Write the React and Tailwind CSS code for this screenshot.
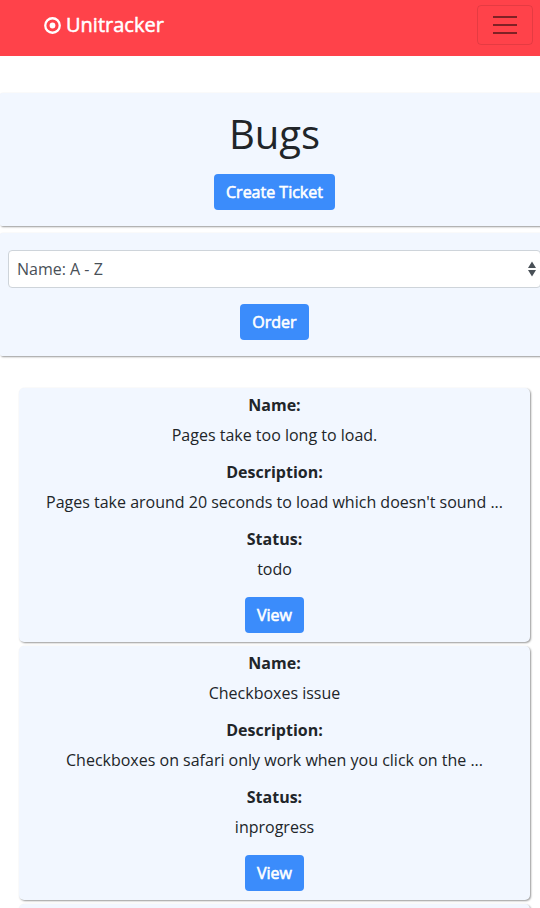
const tickets = [
  {
    name: "Pages take too long to load.",
    description: "Pages take around 20 seconds to load which doesn't sound ...",
    status: "todo",
  },
  {
    name: "Checkboxes issue",
    description: "Checkboxes on safari only work when you click on the ...",
    status: "inprogress",
  },
];

function Button({ children }) {
  return (
    <button className="h-9 rounded-[4px] bg-[#3b8cfb] px-3 text-base leading-6 font-normal whitespace-nowrap text-white [-webkit-text-stroke:0.6px_white]">
      {children}
    </button>
  );
}

function Field({ label, value }) {
  return (
    <div className="mb-[7px]">
      <div className="h-[30px] leading-[30px] font-bold">{label}</div>
      <div className="h-[30px] leading-[30px] whitespace-nowrap">{value}</div>
    </div>
  );
}

function TicketCard({ ticket }) {
  return (
    <article className="flex h-[254px] flex-col items-center rounded-[5px] bg-[#f2f7ff] pt-[2px] text-center shadow-[1px_1px_2px_#999]">
      <Field label="Name:" value={ticket.name} />
      <Field label="Description:" value={ticket.description} />
      <Field label="Status:" value={ticket.status} />
      <div className="mt-[6px]">
        <Button>View</Button>
      </div>
    </article>
  );
}

export default function App() {
  return (
    <div className="h-[908px] w-[540px] overflow-hidden bg-white font-['Open_Sans',sans-serif] text-base text-[#212529]">
      <nav className="flex h-14 items-start justify-between bg-[#ff424a] pr-[7px] pl-11">
        <div className="flex h-[50px] items-center gap-[5px] text-xl leading-[30px] font-normal text-white">
          <svg width="17" height="17" viewBox="0 0 17 17" fill="none">
            <circle cx="8.5" cy="8.5" r="7.25" stroke="currentColor" strokeWidth="2.3" />
            <circle cx="8.5" cy="8.5" r="2.9" fill="currentColor" />
          </svg>
          <span className="mb-px [-webkit-text-stroke:0.5px_white]">Unitracker</span>
        </div>
        <button
          aria-label="Toggle navigation"
          className="mt-[5px] flex h-10 w-14 flex-col items-center justify-center gap-[6px] rounded-[4px] border border-black/10"
        >
          <span className="h-[2px] w-6 bg-black/50" />
          <span className="h-[2px] w-6 bg-black/50" />
          <span className="h-[2px] w-6 bg-black/50" />
        </button>
      </nav>

      <main className="w-[549px] pt-[37px]">
        <header className="flex h-[133px] flex-col items-center rounded-[2px] bg-[#f2f7ff] pt-[17px] shadow-[1px_1px_2px_#999]">
          <h1 className="mb-4 text-[40px] leading-[48px] font-normal">Bugs</h1>
          <Button>Create Ticket</Button>
        </header>

        <section className="mt-[7px] flex h-[123px] flex-col items-center rounded-[2px] bg-[#f2f7ff] px-2 pt-[17px] shadow-[1px_1px_2px_#999]">
          <div className="mb-4 flex h-[38px] w-full shrink-0 items-center justify-between rounded-[4px] border border-[#ced4da] bg-white px-2 text-[#495057]">
            <span>Name: A - Z</span>
            <svg className="-mr-[4px]" width="8" height="16" viewBox="0 0 8 16" fill="#495057">
              <path d="M4 0.5L8 7H0ZM4 15.5L0 9H8Z" />
            </svg>
          </div>
          <Button>Order</Button>
        </section>

        <div className="mt-8 flex flex-col gap-1 px-[19px]">
          {tickets.map((ticket) => (
            <TicketCard key={ticket.name} ticket={ticket} />
          ))}
          <article className="h-[254px] rounded-[5px] bg-[#f2f7ff] shadow-[1px_1px_2px_#999]" />
        </div>
      </main>
    </div>
  );
}
